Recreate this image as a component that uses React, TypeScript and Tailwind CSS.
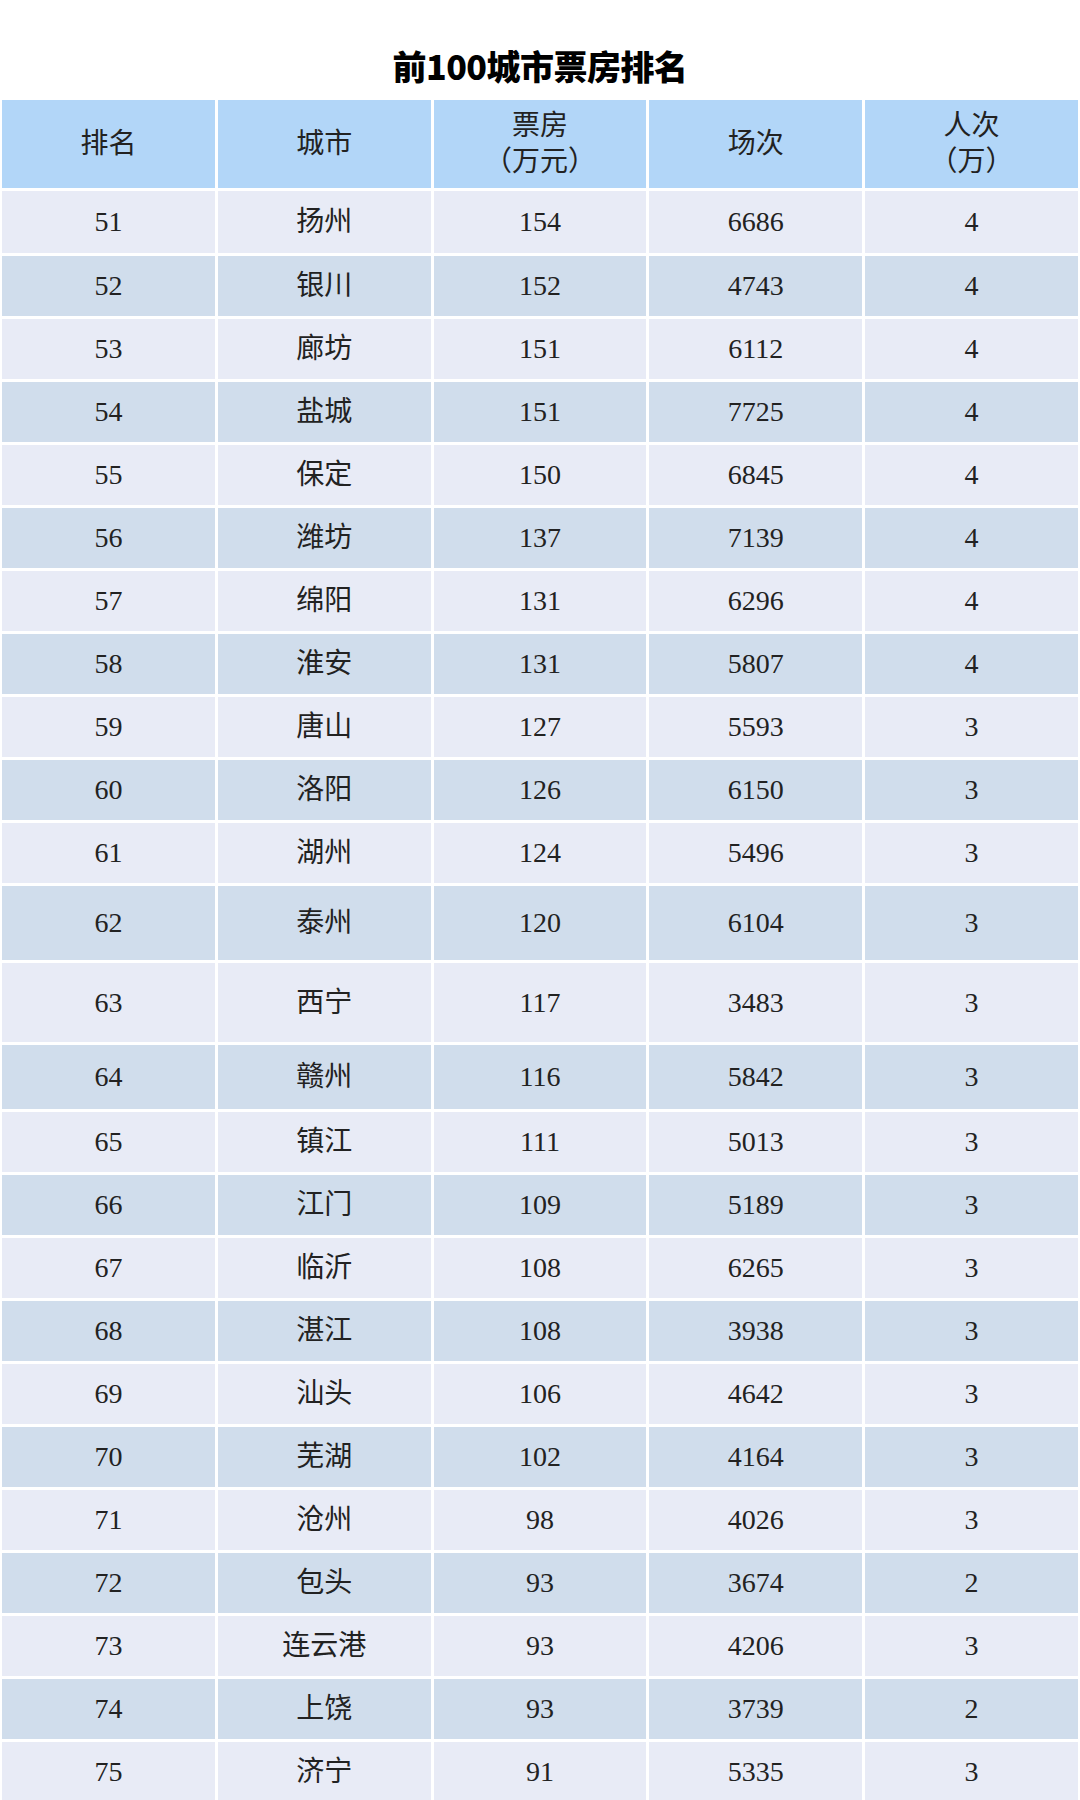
import React from 'react';

type Row = {
  rank: number;
  city: string;
  box: number;
  shows: number;
  people: number;
  h?: string;
};

const rows: Row[] = [
  { rank: 51, city: '扬州', box: 154, shows: 6686, people: 4, h: 'h-[62px]' },
  { rank: 52, city: '银川', box: 152, shows: 4743, people: 4 },
  { rank: 53, city: '廊坊', box: 151, shows: 6112, people: 4 },
  { rank: 54, city: '盐城', box: 151, shows: 7725, people: 4 },
  { rank: 55, city: '保定', box: 150, shows: 6845, people: 4 },
  { rank: 56, city: '潍坊', box: 137, shows: 7139, people: 4 },
  { rank: 57, city: '绵阳', box: 131, shows: 6296, people: 4 },
  { rank: 58, city: '淮安', box: 131, shows: 5807, people: 4 },
  { rank: 59, city: '唐山', box: 127, shows: 5593, people: 3 },
  { rank: 60, city: '洛阳', box: 126, shows: 6150, people: 3 },
  { rank: 61, city: '湖州', box: 124, shows: 5496, people: 3 },
  { rank: 62, city: '泰州', box: 120, shows: 6104, people: 3, h: 'h-[74px]' },
  { rank: 63, city: '西宁', box: 117, shows: 3483, people: 3, h: 'h-[79px]' },
  { rank: 64, city: '赣州', box: 116, shows: 5842, people: 3, h: 'h-[64px]' },
  { rank: 65, city: '镇江', box: 111, shows: 5013, people: 3 },
  { rank: 66, city: '江门', box: 109, shows: 5189, people: 3 },
  { rank: 67, city: '临沂', box: 108, shows: 6265, people: 3 },
  { rank: 68, city: '湛江', box: 108, shows: 3938, people: 3 },
  { rank: 69, city: '汕头', box: 106, shows: 4642, people: 3 },
  { rank: 70, city: '芜湖', box: 102, shows: 4164, people: 3 },
  { rank: 71, city: '沧州', box: 98, shows: 4026, people: 3 },
  { rank: 72, city: '包头', box: 93, shows: 3674, people: 2 },
  { rank: 73, city: '连云港', box: 93, shows: 4206, people: 3 },
  { rank: 74, city: '上饶', box: 93, shows: 3739, people: 2 },
  { rank: 75, city: '济宁', box: 91, shows: 5335, people: 3 },
];

const font = {
  fontFamily: '"Liberation Serif", "Noto Sans CJK SC", serif',
};

const App: React.FC = () => {
  return (
    <div className="w-[1080px] h-[1800px] bg-white overflow-hidden text-[#222]" style={font}>
      {/* Title */}
      <div className="h-[100px] flex justify-center pt-[49px]">
        <h1
          className="text-[34px] leading-none font-black text-black tracking-[-0.5px]"
          style={{ fontFamily: '"Noto Sans CJK SC", "Liberation Sans", sans-serif' }}
        >
          前100城市票房排名
        </h1>
      </div>

      <div className="px-[2px] flex flex-col gap-[3px]">
        {/* Header */}
        <div className="grid grid-cols-5 gap-[3px] h-[88px] text-[28px]">
          {['排名', '城市'].map((t) => (
            <div key={t} className="bg-[#b2d6f8] flex items-center justify-center">
              {t}
            </div>
          ))}
          <div className="bg-[#b2d6f8] flex flex-col items-center justify-center leading-[36px]">
            <span>票房</span>
            <span>（万元）</span>
          </div>
          <div className="bg-[#b2d6f8] flex items-center justify-center">场次</div>
          <div className="bg-[#b2d6f8] flex flex-col items-center justify-center leading-[36px]">
            <span>人次</span>
            <span>（万）</span>
          </div>
        </div>

        {/* Body */}
        {rows.map((r, i) => {
          const bg = i % 2 === 0 ? 'bg-[#e8ebf6]' : 'bg-[#d0ddec]';
          return (
            <div key={r.rank} className={`grid grid-cols-5 gap-[3px] text-[28px] ${r.h ?? 'h-[60px]'}`}>
              {[r.rank, r.city, r.box, r.shows, r.people].map((v, j) => (
                <div key={j} className={`${bg} flex items-center justify-center`}>
                  {v}
                </div>
              ))}
            </div>
          );
        })}
      </div>
    </div>
  );
};

export default App;
